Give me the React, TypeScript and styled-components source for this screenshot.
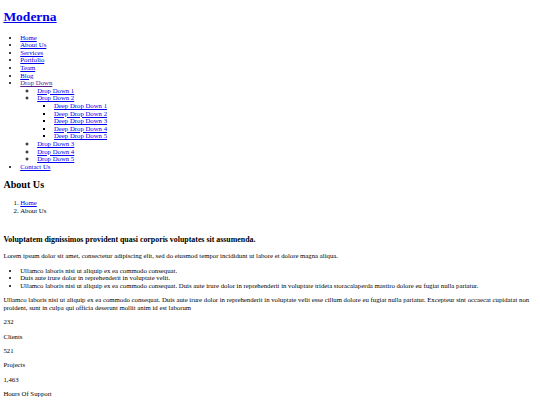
import React from 'react';
import styled, { createGlobalStyle } from 'styled-components';

// the page is an unstyled document photographed at 0.421875 scale
const base = 6.75;
const line = 7.59;
const indent = 16.875;

const GlobalStyle = createGlobalStyle`
  html, body {
    background: #ffffff;
  }
  body {
    margin: 0 3.375px 3.375px;
    font-family: "Liberation Serif", "Times New Roman", serif;
    font-size: ${base}px;
    line-height: ${line}px;
    color: #000000;
  }
`;

const Link = styled.a<{ $visited?: boolean }>`
  color: ${props => (props.$visited ? '#551a8b' : '#0000ee')};
  text-decoration: underline;
  cursor: pointer;
`;

const Header = styled.header`
  display: block;
`;

const Logo = styled.h1`
  font-size: ${base * 2}px;
  line-height: 15.61px;
  font-weight: bold;
  margin: ${base * 2 * 0.67}px 0;
`;

const NavList = styled.ul<{ $level?: number }>`
  list-style-type: ${props =>
    props.$level === 2 ? 'circle' : props.$level === 3 ? 'square' : 'disc'};
  margin: ${props => (props.$level && props.$level > 1 ? '0' : `${base}px 0`)};
  padding-left: ${indent}px;
`;

const NavItem = styled.li`
  line-height: ${line}px;
`;

const PageTitle = styled.h2`
  font-size: ${base * 1.5}px;
  line-height: 11.81px;
  font-weight: bold;
  margin: ${base * 1.5 * 0.83}px 0;
`;

const Crumbs = styled.ol`
  list-style-type: decimal;
  margin: ${base}px 0;
  padding-left: ${indent}px;
`;

const AboutSection = styled.section`
  padding-top: 6.7px;
`;

const Lead = styled.h3`
  font-size: ${base * 1.17}px;
  line-height: 9.1px;
  font-weight: bold;
  margin: ${base * 1.17}px 0;
`;

const Text = styled.p`
  margin: ${base}px 0;
`;

const Bullets = styled.ul`
  list-style-type: disc;
  margin: ${base}px 0;
  padding-left: ${indent}px;
`;

const Counts = styled.div`
  display: block;
`;

const deep = ['Deep Drop Down 1', 'Deep Drop Down 2', 'Deep Drop Down 3', 'Deep Drop Down 4', 'Deep Drop Down 5'];

const stats = [
  { value: '232', label: 'Clients' },
  { value: '521', label: 'Projects' },
  { value: '1,463', label: 'Hours Of Support' },
];

const App: React.FC = () => {
  return (
    <>
      <GlobalStyle />
      <Header>
        <Logo>
          <Link href="#">Moderna</Link>
        </Logo>
        <nav>
          <NavList>
            {['Home', 'About Us', 'Services', 'Portfolio', 'Team', 'Blog'].map(item => (
              <NavItem key={item}>
                <Link href="#">{item}</Link>
              </NavItem>
            ))}
            <NavItem>
              <Link href="#" $visited>Drop Down</Link>
              <NavList $level={2}>
                <NavItem>
                  <Link href="#">Drop Down 1</Link>
                </NavItem>
                <NavItem>
                  <Link href="#">Drop Down 2</Link>
                  <NavList $level={3}>
                    {deep.map(item => (
                      <NavItem key={item}>
                        <Link href="#">{item}</Link>
                      </NavItem>
                    ))}
                  </NavList>
                </NavItem>
                {['Drop Down 3', 'Drop Down 4', 'Drop Down 5'].map(item => (
                  <NavItem key={item}>
                    <Link href="#">{item}</Link>
                  </NavItem>
                ))}
              </NavList>
            </NavItem>
            <NavItem>
              <Link href="#">Contact Us</Link>
            </NavItem>
          </NavList>
        </nav>
      </Header>
      <main>
        <section>
          <PageTitle>About Us</PageTitle>
          <Crumbs>
            <li>
              <Link href="#">Home</Link>
            </li>
            <li>About Us</li>
          </Crumbs>
        </section>
        <AboutSection>
          <Lead>Voluptatem dignissimos provident quasi corporis voluptates sit assumenda.</Lead>
          <Text>
            Lorem ipsum dolor sit amet, consectetur adipiscing elit, sed do eiusmod tempor incididunt ut labore et dolore magna aliqua.
          </Text>
          <Bullets>
            <li>Ullamco laboris nisi ut aliquip ex ea commodo consequat.</li>
            <li>Duis aute irure dolor in reprehenderit in voluptate velit.</li>
            <li>
              Ullamco laboris nisi ut aliquip ex ea commodo consequat. Duis aute irure dolor in reprehenderit in voluptate trideta storacalaperda mastiro dolore eu fugiat nulla pariatur.
            </li>
          </Bullets>
          <Text>
            Ullamco laboris nisi ut aliquip ex ea commodo consequat. Duis aute irure dolor in reprehenderit in voluptate velit esse cillum dolore eu fugiat nulla pariatur. Excepteur sint occaecat cupidatat non proident, sunt in culpa qui officia deserunt mollit anim id est laborum
          </Text>
        </AboutSection>
        <Counts>
          {stats.map(s => (
            <React.Fragment key={s.label}>
              <Text>{s.value}</Text>
              <Text>{s.label}</Text>
            </React.Fragment>
          ))}
        </Counts>
      </main>
    </>
  );
};

export default App;
